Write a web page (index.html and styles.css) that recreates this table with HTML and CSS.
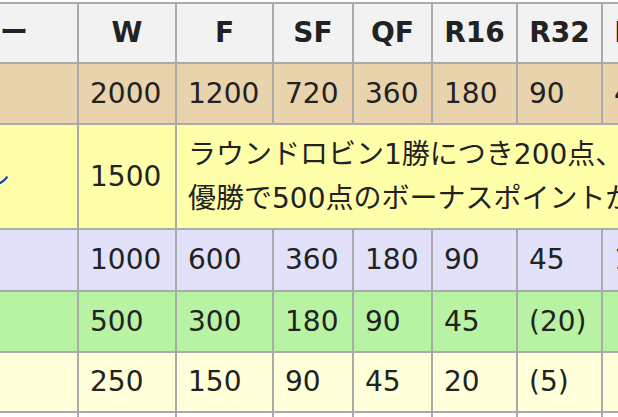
FILE: index.html
```html
<!DOCTYPE html>
<html lang="ja">
<head>
<meta charset="utf-8">
<title>ポイント配分</title>
<link rel="stylesheet" href="styles.css">
</head>
<body>
<div class="points" role="table">
  <div class="cell head first">大会カテゴリー</div>
  <div class="cell head">W</div>
  <div class="cell head">F</div>
  <div class="cell head">SF</div>
  <div class="cell head">QF</div>
  <div class="cell head">R16</div>
  <div class="cell head">R32</div>
  <div class="cell head">R64</div>

  <div class="cell gs">四大大会</div>
  <div class="cell gs">2000</div>
  <div class="cell gs">1200</div>
  <div class="cell gs">720</div>
  <div class="cell gs">360</div>
  <div class="cell gs">180</div>
  <div class="cell gs">90</div>
  <div class="cell gs">45</div>

  <div class="cell fin"><a class="link" href="#">ATP ファイナル</a></div>
  <div class="cell fin">1500</div>
  <div class="cell fin wide">ラウンドロビン1勝につき200点、<br>優勝で500点のボーナスポイントが加算される</div>

  <div class="cell m1000">マスターズ</div>
  <div class="cell m1000">1000</div>
  <div class="cell m1000">600</div>
  <div class="cell m1000">360</div>
  <div class="cell m1000">180</div>
  <div class="cell m1000">90</div>
  <div class="cell m1000">45</div>
  <div class="cell m1000">10</div>

  <div class="cell a500">ATP 500</div>
  <div class="cell a500">500</div>
  <div class="cell a500">300</div>
  <div class="cell a500">180</div>
  <div class="cell a500">90</div>
  <div class="cell a500">45</div>
  <div class="cell a500">(20)</div>
  <div class="cell a500"></div>

  <div class="cell a250">ATP 250</div>
  <div class="cell a250">250</div>
  <div class="cell a250">150</div>
  <div class="cell a250">90</div>
  <div class="cell a250">45</div>
  <div class="cell a250">20</div>
  <div class="cell a250">(5)</div>
  <div class="cell a250"></div>

  <div class="cell plain"></div>
  <div class="cell plain"></div>
  <div class="cell plain"></div>
  <div class="cell plain"></div>
  <div class="cell plain"></div>
  <div class="cell plain"></div>
  <div class="cell plain"></div>
  <div class="cell plain"></div>
</div>
</body>
</html>
```

FILE: styles.css
```css
html, body {
  margin: 0;
  padding: 0;
  background: #ffffff;
  overflow: hidden;
}

body {
  font-family: "DejaVu Sans", "Noto Sans CJK JP", sans-serif;
  font-size: 28px;
  color: #222222;
}

.points {
  display: grid;
  grid-template-columns: 278px 96px 95px 78px 77px 83px 83px 83px;
  grid-template-rows: 58px 59px 103px 60px 59px 58px 30px;
  gap: 2px;
  padding: 2px;
  background: #aaaaaa;
  width: max-content;
  margin: 2px 0 0 -203px;
}

.cell {
  display: flex;
  align-items: center;
  padding: 0 11px;
  line-height: 44px;
  white-space: nowrap;
  overflow: hidden;
}

.head {
  background: #f2f2f2;
  font-weight: bold;
  justify-content: center;
}

.head.first {
  padding-right: 27px;
}

.gs { background: #e8d3ad; }
.fin { background: #ffffaa; }
.m1000 { background: #e1e1f9; }
.a500 { background: #b8f3a3; }
.a250 { background: #ffffd9; }
.plain { background: #ffffff; }

.wide {
  grid-column: 3 / -1;
}

.link {
  color: #0645ad;
  text-decoration: none;
}
```
